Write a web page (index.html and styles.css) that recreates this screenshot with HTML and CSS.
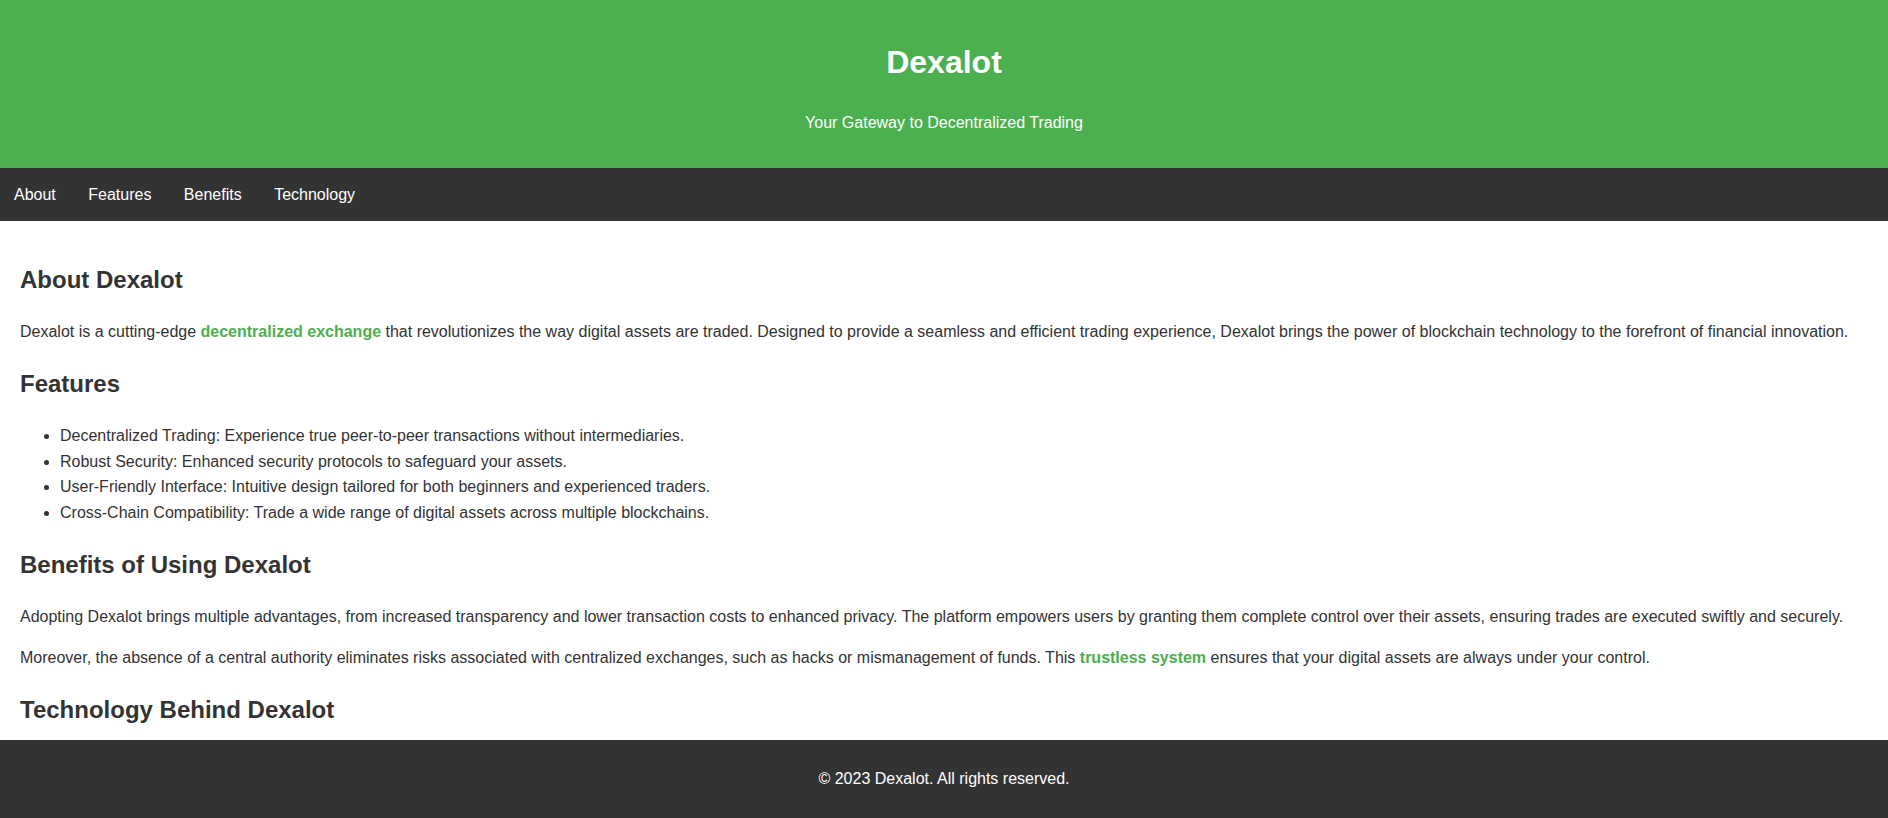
FILE: index.html
```html
<!DOCTYPE html>
<html lang="en">
<head>
  <meta charset="UTF-8">
  <title>Dexalot - Your Gateway to Decentralized Trading</title>
  <link rel="stylesheet" href="styles.css">
</head>
<body>
  <header>
    <h1>Dexalot</h1>
    <p>Your Gateway to Decentralized Trading</p>
  </header>

  <nav>
    <a href="#about">About</a>
    <a href="#features">Features</a>
    <a href="#benefits">Benefits</a>
    <a href="#technology">Technology</a>
  </nav>

  <main>
    <section id="about">
      <h2>About Dexalot</h2>
      <p>Dexalot is a cutting-edge <strong class="highlight">decentralized exchange</strong> that revolutionizes the way digital assets are traded. Designed to provide a seamless and efficient trading experience, Dexalot brings the power of blockchain technology to the forefront of financial innovation.</p>
    </section>

    <section id="features">
      <h2>Features</h2>
      <ul>
        <li>Decentralized Trading: Experience true peer-to-peer transactions without intermediaries.</li>
        <li>Robust Security: Enhanced security protocols to safeguard your assets.</li>
        <li>User-Friendly Interface: Intuitive design tailored for both beginners and experienced traders.</li>
        <li>Cross-Chain Compatibility: Trade a wide range of digital assets across multiple blockchains.</li>
      </ul>
    </section>

    <section id="benefits">
      <h2>Benefits of Using Dexalot</h2>
      <p>Adopting Dexalot brings multiple advantages, from increased transparency and lower transaction costs to enhanced privacy. The platform empowers users by granting them complete control over their assets, ensuring trades are executed swiftly and securely.</p>
      <p>Moreover, the absence of a central authority eliminates risks associated with centralized exchanges, such as hacks or mismanagement of funds. This <strong class="highlight">trustless system</strong> ensures that your digital assets are always under your control.</p>
    </section>

    <section id="technology">
      <h2>Technology Behind Dexalot</h2>
      <p>Dexalot is built on secure smart contracts that handle order matching and settlement directly on the blockchain.</p>
    </section>
  </main>

  <footer>
    <p>&copy; 2023 Dexalot. All rights reserved.</p>
  </footer>
</body>
</html>
```

FILE: styles.css
```css
body {
  margin: 0;
  font-family: Arial, "Liberation Sans", sans-serif;
  line-height: 1.6;
  color: #333;
  background-color: #fff;
}

header {
  background-color: #4CAF50;
  color: white;
  padding: 1em 0;
  text-align: center;
}

nav {
  background-color: #333;
}

nav a {
  display: inline-block;
  color: white;
  padding: 14px;
  text-decoration: none;
}

nav a:hover {
  background-color: #ddd;
  color: black;
}

main {
  padding: 20px;
}

.highlight {
  color: #4CAF50;
  font-weight: bold;
}

footer {
  background-color: #333;
  color: white;
  text-align: center;
  padding: 10px;
  position: fixed;
  left: 0;
  bottom: 0;
  width: 100%;
  box-sizing: border-box;
}
```
